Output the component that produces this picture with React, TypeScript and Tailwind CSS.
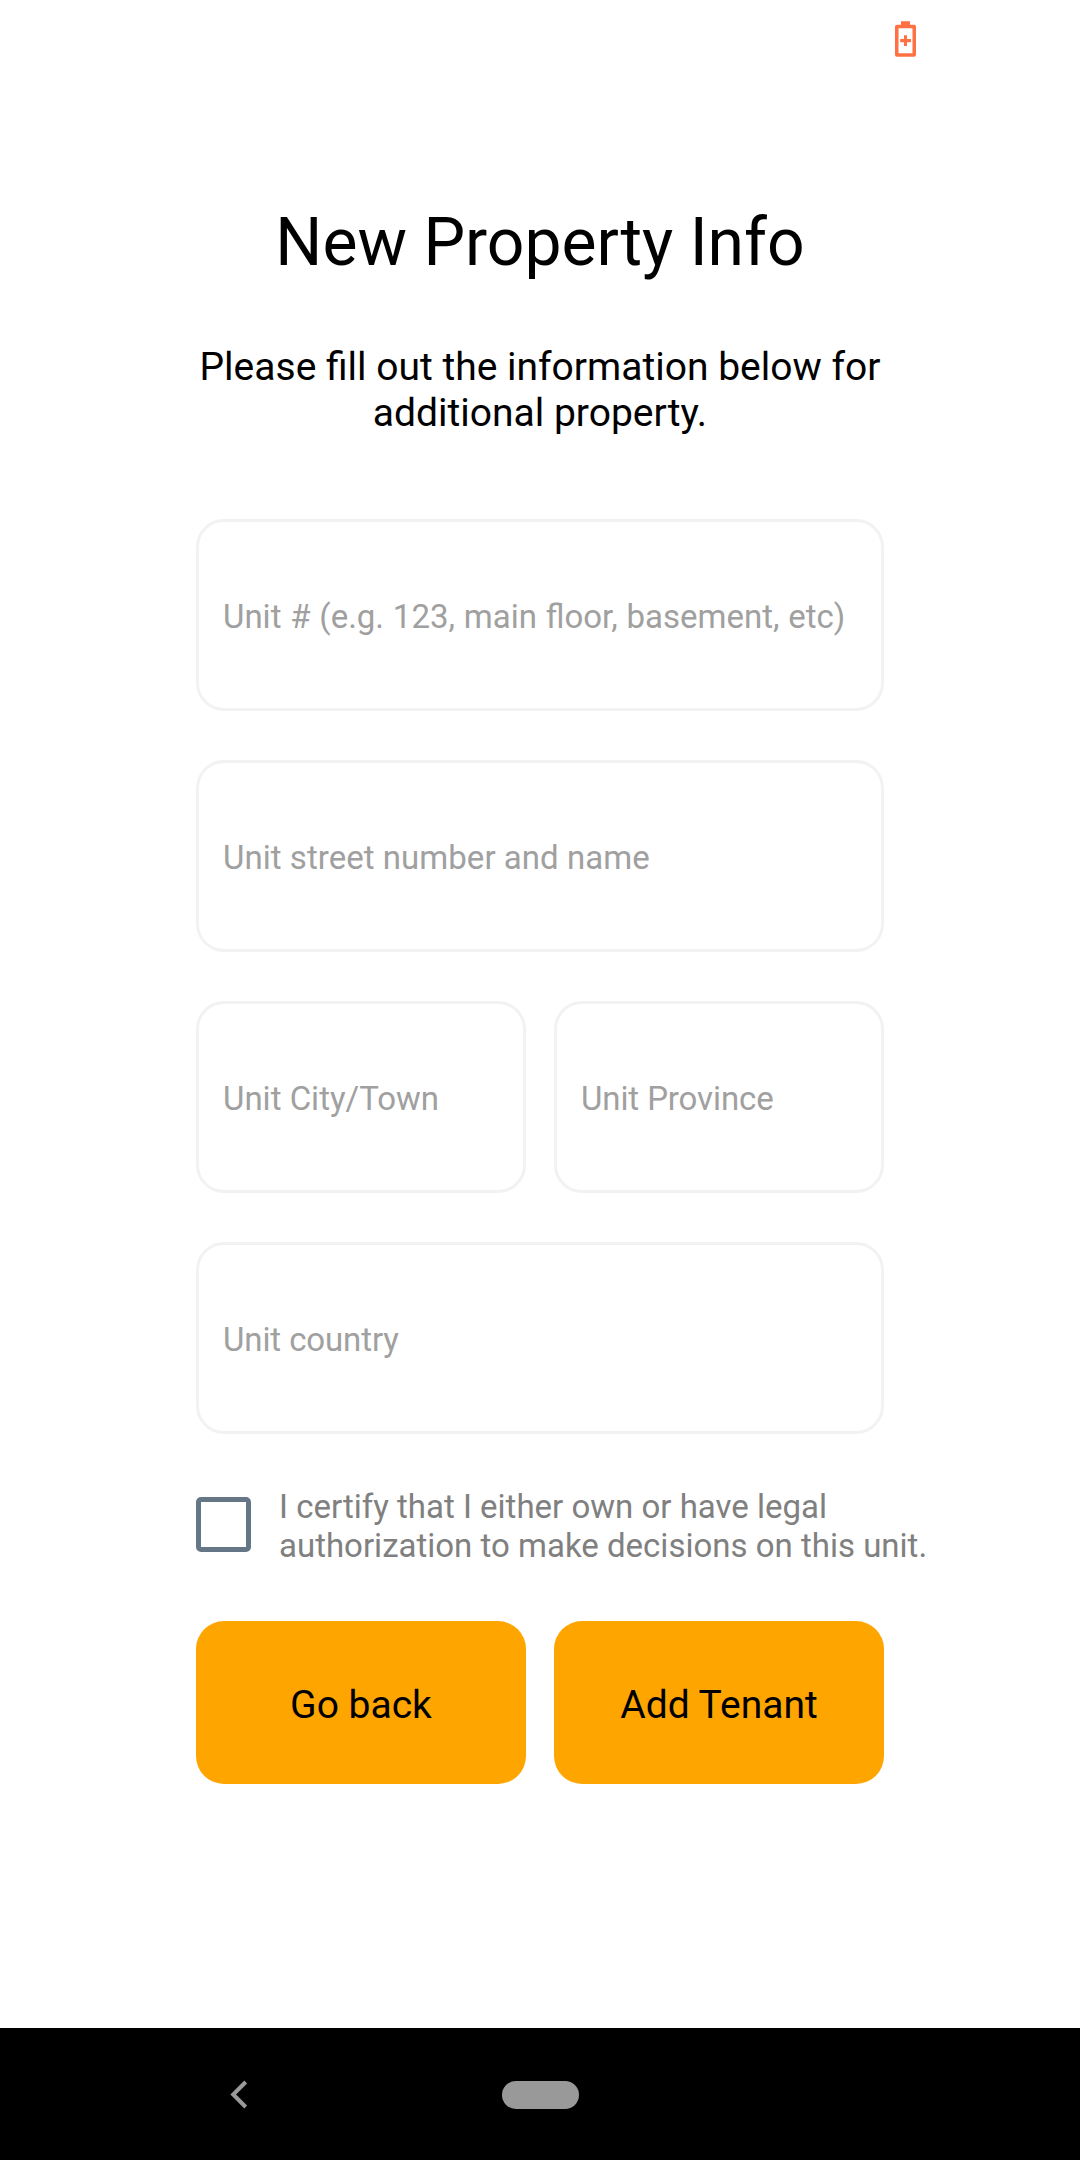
import type { ReactNode } from "react";

function Field({ label, spacing = "" }: { label: string; spacing?: string }) {
  return (
    <div className="flex h-[192px] min-w-0 flex-1 items-center rounded-[28px] border-[3px] border-[#f2f2f2] pl-[24px] text-[33px] whitespace-nowrap text-[#a0a0a0]">
      <span className={`mt-[3px] ${spacing}`}>{label}</span>
    </div>
  );
}

function Button({ children }: { children: ReactNode }) {
  return (
    <button className="flex h-[163px] flex-1 items-center justify-center rounded-[28px] bg-[#ffa500] pt-[5px] text-[39px] text-black">
      {children}
    </button>
  );
}

export default function App() {
  return (
    <div className="flex h-[2160px] w-[1080px] flex-col overflow-hidden bg-white font-[Roboto,sans-serif] text-black">
      <header className="flex h-[80px] justify-end pt-[20px] pr-[158px]">
        <svg width="33" height="38" viewBox="0 0 33 38" fill="#ff7043">
          <path
            fillRule="evenodd"
            d="M12 1.2h9v3.6h4a2 2 0 0 1 2 2V34.700a2 2 0 0 1-2 2H8a2 2 0 0 1-2-2V6.800a2 2 0 0 1 2-2h4zM9.500 8.300v24.900h14V8.300zM15 15.300h3v3.700h4v3.200h-4v3.700h-3v-3.700h-3.800V19H15z"
          />
        </svg>
      </header>
      <main className="flex flex-1 flex-col pl-[196px]">
        <h1 className="mt-[124px] w-[688px] text-center text-[66px] leading-[78px]">New Property Info</h1>
        <p className="mt-[62px] w-[688px] text-center text-[39px] leading-[46px]">
          Please fill out the information below for<br />additional property.
        </p>
        <div className="mt-[83px] flex w-[688px] flex-col gap-[49px]">
          <div className="flex"><Field label="Unit # (e.g. 123, main floor, basement, etc)" spacing="[word-spacing:0.6px]" /></div>
          <div className="flex"><Field label="Unit street number and name" spacing="tracking-[0.04px]" /></div>
          <div className="flex gap-[28px]"><Field label="Unit City/Town" /><Field label="Unit Province" spacing="tracking-[-0.1px]" /></div>
          <div className="flex"><Field label="Unit country" spacing="tracking-[-0.1px]" /></div>
        </div>
        <label className="mt-[53px] flex items-center gap-[28px] text-[33px] leading-[39px] whitespace-nowrap text-[#808080]">
          <span className="mb-[4px] size-[55px] rounded-[5px] border-[5px] border-[#657786]" />
          <span>I certify that I either own or have legal<br />authorization to make decisions on this unit.</span>
        </label>
        <div className="mt-[56px] flex w-[688px] gap-[28px]">
          <Button>Go back</Button>
          <Button>Add Tenant</Button>
        </div>
      </main>
      <nav className="flex h-[132px] items-center bg-black">
        <svg className="ml-[230px]" width="20" height="30" viewBox="0 0 20 30" fill="none" stroke="#999" strokeWidth="4">
          <path d="M15.700 3L3.200 15.500 15.700 28" />
        </svg>
        <span className="mt-px ml-[252px] h-[28px] w-[77px] rounded-full bg-[#999]" />
      </nav>
    </div>
  );
}
